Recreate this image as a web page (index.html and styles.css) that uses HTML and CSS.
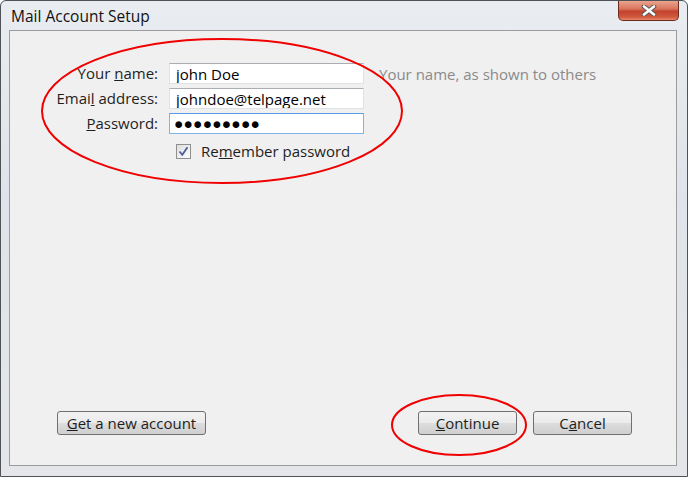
FILE: index.html
```html
<!DOCTYPE html>
<html lang="en">
<head>
    <meta charset="UTF-8">
    <title>Mail Account Setup</title>
    <link rel="stylesheet" href="styles.css">
</head>
<body>
    <div class="window">
        <div class="titlebar">
            <span class="title">Mail Account Setup</span>
            <button class="close" type="button" aria-label="Close">
                <svg width="18" height="11" viewBox="0 0 18 11">
                    <path d="M4 1.5 L14 9.5 M14 1.5 L4 9.5" stroke="#5a5a5a" stroke-width="4.6" stroke-linecap="round"/>
                    <path d="M4 1.5 L14 9.5 M14 1.5 L4 9.5" stroke="#ffffff" stroke-width="2.6" stroke-linecap="round"/>
                </svg>
            </button>
        </div>

        <div class="client">
            <form class="account-form">
                <label class="field-label" for="realname">Your <u>n</u>ame:</label>
                <input class="field" type="text" id="realname" value="john Doe">
                <span class="hint">Your name, as shown to others</span>

                <label class="field-label" for="email">Emai<u>l</u> address:</label>
                <input class="field" type="text" id="email" value="johndoe@telpage.net">
                <span></span>

                <label class="field-label" for="password"><u>P</u>assword:</label>
                <div class="field field-focus" id="password">●●●●●●●●●</div>
                <span></span>

                <span></span>
                <label class="remember">
                    <span class="checkbox">
                        <svg width="11" height="11" viewBox="0 0 11 11">
                            <path d="M1.5 5.5 L4.3 8.8 L9.5 1.2" fill="none" stroke="#4a5f97" stroke-width="1.8"/>
                        </svg>
                    </span>
                    <span>Re<u>m</u>ember password</span>
                </label>
                <span></span>
            </form>

            <div class="actions">
                <button class="btn btn-wide" type="button"><u>G</u>et a new account</button>
                <div class="actions-right">
                    <button class="btn" type="button"><u>C</u>ontinue</button>
                    <button class="btn" type="button">C<u>a</u>ncel</button>
                </div>
            </div>
        </div>

        <!-- red annotation marks drawn over the dialog -->
        <svg class="marks" width="688" height="477" viewBox="0 0 688 477">
            <ellipse cx="222" cy="111" rx="180" ry="72" fill="none" stroke="#f00000" stroke-width="2"/>
            <ellipse cx="459" cy="425" rx="67" ry="30" fill="none" stroke="#f00000" stroke-width="2"/>
        </svg>
    </div>
</body>
</html>
```

FILE: styles.css
```css
body {
    margin: 0;
    font-family: "Open Sans", "Noto Sans", sans-serif;
    font-size: 15px;
    color: #1e1e1e;
}
.window {
    position: relative;
    box-sizing: border-box;
    width: 688px;
    height: 477px;
    border: 1px solid #4e5357;
    border-radius: 6px 6px 0 0;
    background: linear-gradient(180deg, #e9edf1 0%, #dfe4ea 40%, #e4e6e9 100%);
    display: flex;
    flex-direction: column;
    overflow: hidden;
}
.titlebar {
    height: 28px;
    display: flex;
    align-items: flex-start;
    justify-content: space-between;
}
.title {
    margin: 4px 0 0 10px;
    font-size: 15.5px;
    color: #111;
}
.close {
    margin-right: 8px;
    width: 61px;
    height: 20px;
    padding: 0;
    border: 1px solid #6d2b20;
    border-top: none;
    border-radius: 0 0 5px 5px;
    background: linear-gradient(180deg, #eba48f 0%, #d9765e 40%, #c2422b 55%, #d05a3f 85%, #e88a68 100%);
    display: flex;
    align-items: center;
    justify-content: center;
}
.client {
    flex: 1;
    margin: 1px 10px 10px 8px;
    border: 1px solid #9c9c9c;
    background: #f0f0f0;
    display: flex;
    flex-direction: column;
    justify-content: space-between;
    padding: 32px 0 30px 0;
}
.account-form {
    display: grid;
    grid-template-columns: 148px 195px auto;
    column-gap: 11px;
    row-gap: 4px;
    align-items: center;
    margin: 0;
}
.field-label {
    text-align: right;
    line-height: 21px;
}
.field {
    box-sizing: border-box;
    height: 21px;
    margin: 0;
    padding: 0 6px;
    border: 1px solid #dfe3e8;
    border-top-color: #abadb3;
    background: #fff;
    font-family: inherit;
    font-size: 15px;
    color: #000;
    line-height: 19px;
}
.field-focus {
    border-color: #7eb4ea;
    border-top-color: #569de5;
    font-size: 15.5px;
    letter-spacing: 0.2px;
    padding-left: 4px;
}
.hint {
    margin-left: 4px;
    color: #8a8a8a;
}
.remember {
    display: flex;
    align-items: center;
    gap: 10px;
    margin: 3px 0 0 7px;
    line-height: 21px;
}
.checkbox {
    box-sizing: border-box;
    width: 15px;
    height: 15px;
    border: 1px solid #8e8f8f;
    background: linear-gradient(135deg, #dedede, #fdfdfd);
    display: flex;
    align-items: center;
    justify-content: center;
}
.actions {
    display: flex;
    justify-content: space-between;
    padding: 0 44px 0 47px;
}
.actions-right {
    display: flex;
    gap: 16px;
}
.btn {
    box-sizing: border-box;
    width: 99px;
    height: 24px;
    border: 1px solid #707070;
    border-radius: 3px;
    background: linear-gradient(180deg, #f2f2f2 0%, #ebebeb 50%, #dddddd 51%, #cfcfcf 100%);
    font-family: inherit;
    font-size: 15px;
    line-height: 20px;
    color: #1e1e1e;
    padding: 0;
}
.btn-wide {
    width: 149px;
}
.marks {
    position: absolute;
    left: -1px;
    top: -1px;
    pointer-events: none;
}
```
